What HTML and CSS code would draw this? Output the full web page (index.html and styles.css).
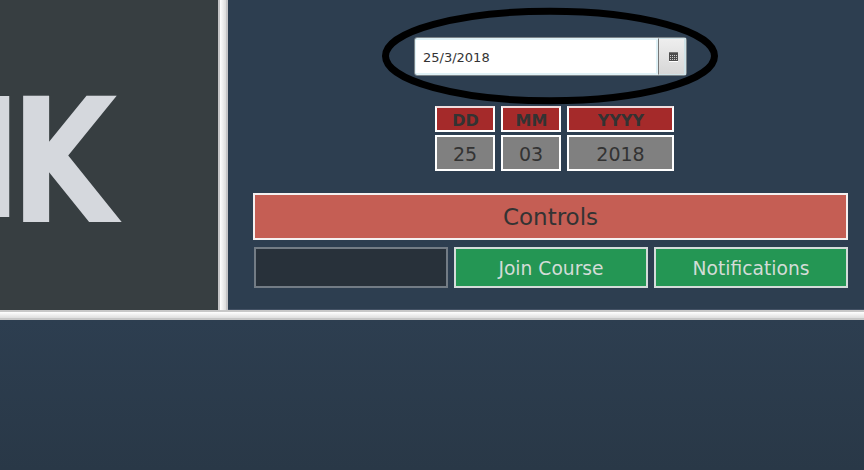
FILE: index.html
```
<!DOCTYPE html>
<html lang="en">
<head>
<meta charset="utf-8">
<title>Course calendar</title>
<link rel="stylesheet" href="styles.css">
</head>
<body>
<main class="app">
  <div class="top">
    <section class="brand">
      <svg class="logo" width="218" height="310" viewBox="0 0 218 310">
        <text x="-86" y="216.5" font-size="165" textLength="107" lengthAdjust="spacingAndGlyphs">N</text>
        <text x="10.5" y="222" font-size="173" textLength="107" lengthAdjust="spacingAndGlyphs">K</text>
      </svg>
    </section>
    <div class="divider-v"></div>
    <section class="side">
      <div class="picker">
        <div class="date">25/3/2018</div>
        <div class="cal">
          <svg width="9" height="10" viewBox="0 0 9 10" shape-rendering="crispEdges">
            <path fill="#4d4d4d" d="M0 0h9v9H0z"/>
            <path fill="#777" d="M0 0h9v1H0z"/>
            <path stroke="#ccc" stroke-dasharray="1 1" d="M1 3.5h7M1 5.5h7M1 7.5h7"/>
            <path fill="#fff" d="M0 9h9v1H0z"/>
          </svg>
        </div>
        <svg class="ring" width="338" height="98" viewBox="0 0 338 98"><ellipse cx="169" cy="49" rx="164.5" ry="44.8"/></svg>
      </div>
      <div class="parts">
        <div class="head">DD</div><div class="head">MM</div><div class="head">YYYY</div>
        <div class="value">25</div><div class="value">03</div><div class="value">2018</div>
      </div>
      <div class="title">Controls</div>
      <div class="buttons">
        <div class="btn off"></div>
        <div class="btn">Join Course</div>
        <div class="btn">Notifications</div>
      </div>
    </section>
  </div>
  <div class="divider-h"></div>
  <section class="bottom"></section>
</main>
</body>
</html>
```
FILE: styles.css
```
* { box-sizing: border-box; }
body { margin: 0; font-family: "DejaVu Sans", sans-serif; color: #333; }
.app { width: 864px; height: 470px; display: flex; flex-direction: column; overflow: hidden; background: #2d3e50; }
.top { display: flex; height: 310px; }
.brand { width: 218px; background: #373e41; overflow: hidden; }
.logo { display: block; fill: #d5d8dd; font-family: "DejaVu Sans", sans-serif; font-weight: bold; }
.divider-v { width: 10px; border: solid #c4c4c6; border-width: 0 2px; background: linear-gradient(90deg, #fff, #dcdcdc); }
.divider-h { height: 10px; border: solid #c8c8c8; border-width: 2px 0; background: linear-gradient(#fff, #dedede); }
.side { width: 636px; padding: 37px 16px 0 25px; background: #2d3e50; border-bottom: 1px solid #435164; }
.bottom { height: 150px; background: linear-gradient(#2d3e50, #293847); }
.picker { position: relative; display: flex; width: 273px; height: 39px; margin-left: 161px; border: 1px solid #7b8388; border-radius: 3px; }
.date { width: 243px; padding-left: 7px; border: 1px solid #dff1f6; border-width: 2px 2px 2px 1px; border-radius: 2px 0 0 2px; background: #fff; font-size: 13px; line-height: 35px; }
.cal { flex: 1; display: flex; align-items: center; justify-content: center; padding-left: 3px; border: 1px solid #d0e3e8; border-left: 1px solid #777; border-right-width: 2px; background: linear-gradient(#eee, #d7d7d7); }
.ring { position: absolute; left: -34px; top: -31px; fill: none; stroke: #000; stroke-width: 7px; }
.parts { display: grid; grid-template: 26px 36px / 60px 60px 107px; gap: 3px 6px; margin: 30px 0 22px 182px; }
.head, .value, .title, .btn { display: flex; align-items: center; justify-content: center; border: 2px solid #fff; }
.head { background: #a52a2a; font-size: 16px; font-weight: bold; padding: 2px 0 0 1px; border-top-color: #eedddd; }
.value { background: #808080; font-size: 19px; padding-top: 2px; }
.title { height: 47px; border-color: #f5f0f0; background: #c55e54; font-size: 23px; }
.buttons { display: grid; grid-template-columns: repeat(3, 194px); gap: 6px; margin: 7px 0 0 1px; }
.btn { height: 41px; background: #249654; border-color: #d5dcda; color: #d3dcd7; font-size: 18.7px; padding-top: 1px; }
.off { background: #28313a; border-color: #737c85; }
```
